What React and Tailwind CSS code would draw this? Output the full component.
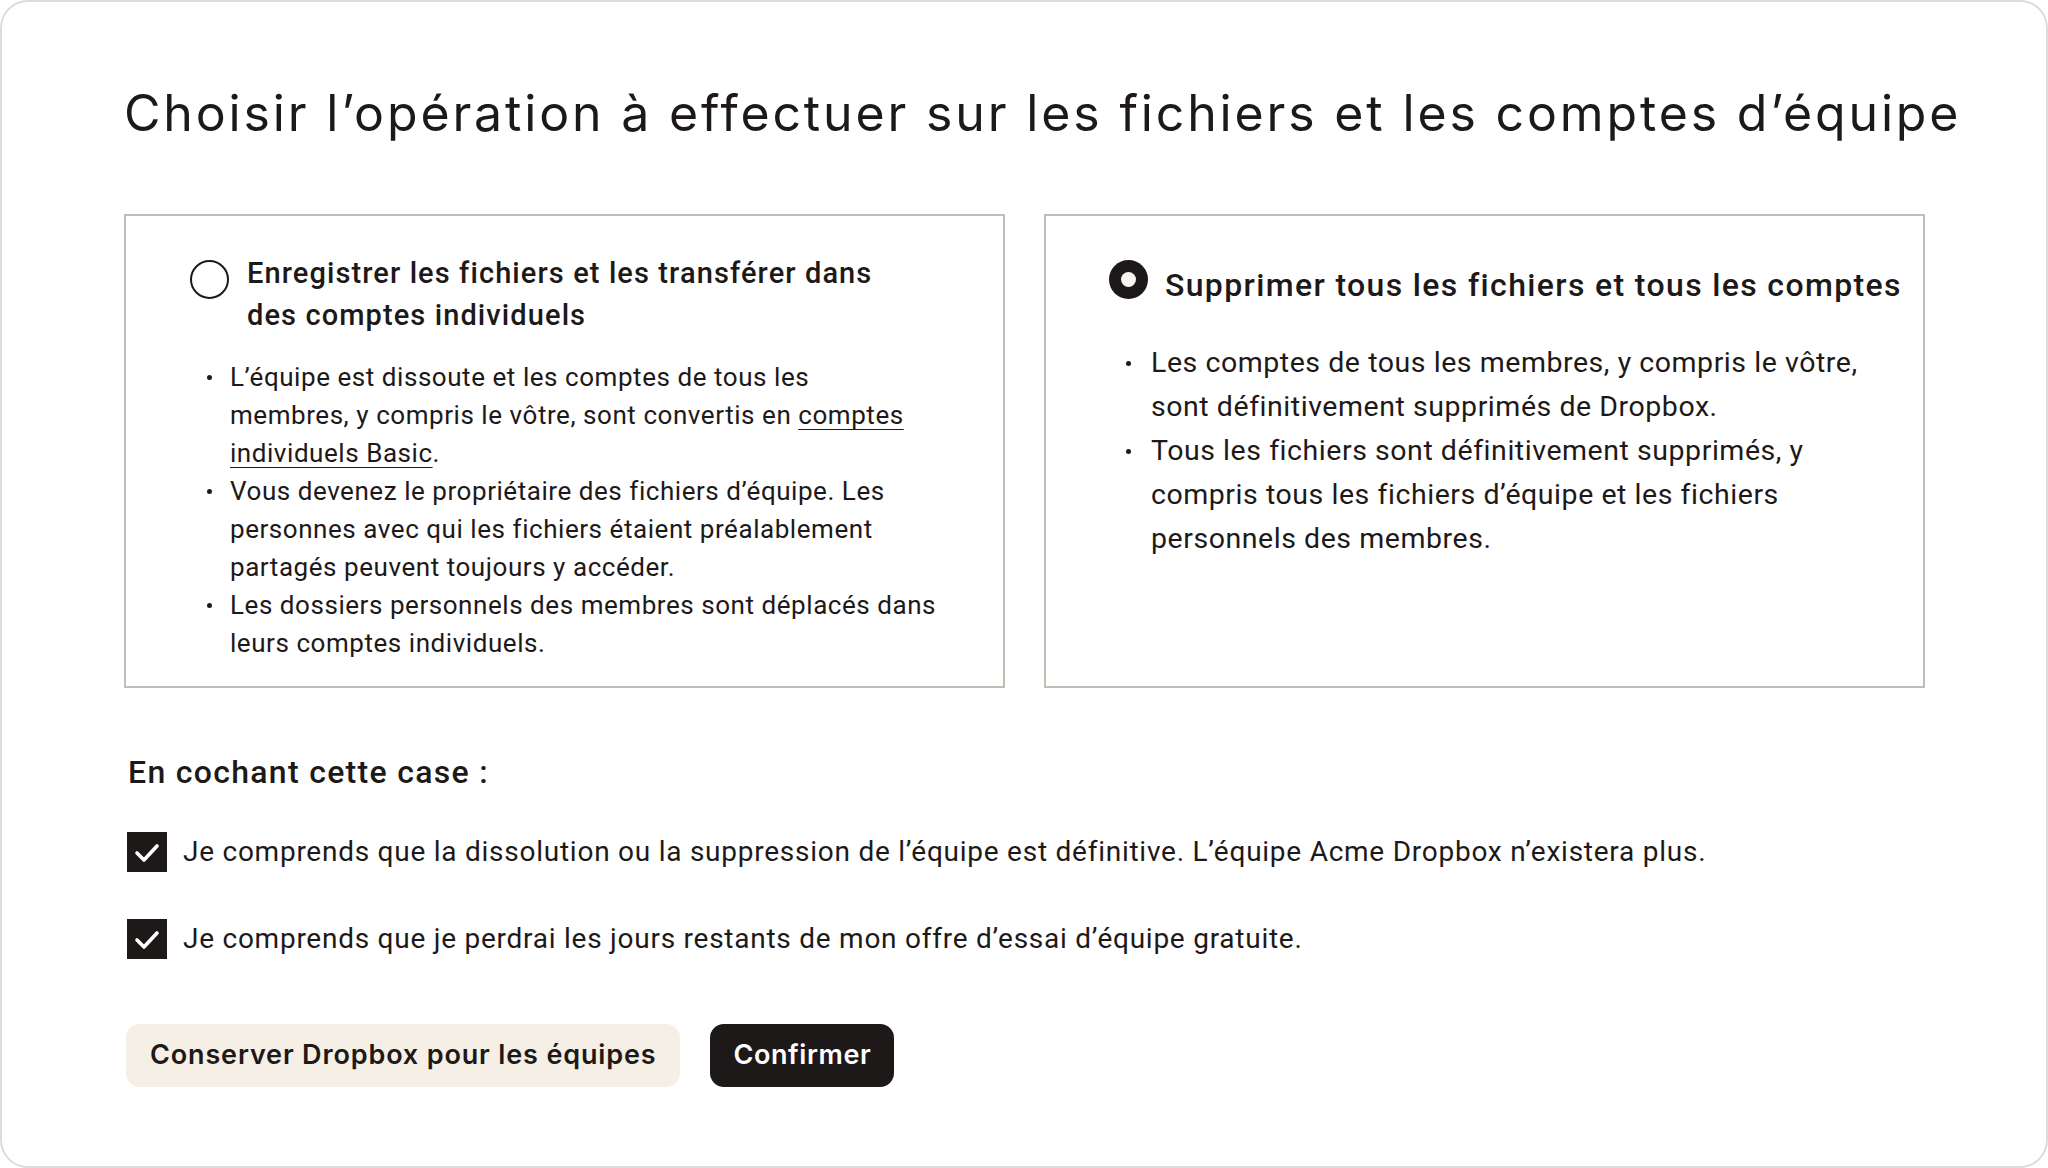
import React from "react";

const body = { fontFamily: "Roboto, 'Liberation Sans', sans-serif" };
const grot = { fontFamily: "Inter, 'Liberation Sans', sans-serif" };

function Bullet({ children, dotTop, w }) {
  return (
    <li className="flex">
      <div className={w}>
        <div className={"ml-[17px] w-[5px] h-[5px] rounded-full bg-[#1e1919] " + dotTop}></div>
      </div>
      <div>{children}</div>
    </li>
  );
}

function Check() {
  return (
    <div className="w-[40px] h-[40px] bg-[#1e1919] shrink-0 flex items-center justify-center">
      <svg width="40" height="40" viewBox="0 0 40 40" fill="none">
        <polyline points="10,21 17,28 30,14" stroke="#ffffff" strokeWidth="3.6" strokeLinecap="round" strokeLinejoin="round" />
      </svg>
    </div>
  );
}

export default function App() {
  return (
    <div className="w-[2048px] h-[1168px] bg-white text-[#1e1919]">
      <div className="w-full h-full border-2 border-[#dcdcdc] rounded-[28px] pl-[122px] pt-[81px]">
        <h1 className="text-[50px] leading-[60px] font-normal tracking-[2.85px] whitespace-nowrap" style={grot}>
          Choisir l’opération à effectuer sur les fichiers et les comptes d’équipe
        </h1>

        <div className="mt-[71px] grid grid-cols-2 gap-[39px] w-[1801px]" style={body}>
          <div className="h-[474px] border-2 border-[#c3beb5] pl-[64px] pt-[36px]">
            <div className="flex items-start gap-[18px]">
              <div className="mt-[8px] w-[39px] h-[39px] rounded-full border-2 border-[#1e1919] shrink-0"></div>
              <div className="text-[29px] leading-[42px] font-medium tracking-[1.1px]">
                Enregistrer les fichiers et les transférer dans<br />des comptes individuels
              </div>
            </div>
            <ul className="mt-[22px] text-[26px] leading-[38px] tracking-[0.55px]">
              <Bullet w="w-[40px] shrink-0" dotTop="mt-[17px]">
                L’équipe est dissoute et les comptes de tous les<br />membres, y compris le vôtre, sont convertis en{" "}
                <span className="underline underline-offset-[5px] decoration-1">comptes<br />individuels Basic</span>.
              </Bullet>
              <Bullet w="w-[40px] shrink-0" dotTop="mt-[17px]">
                Vous devenez le propriétaire des fichiers d’équipe. Les<br />personnes avec qui les fichiers étaient préalablement<br />partagés peuvent toujours y accéder.
              </Bullet>
              <Bullet w="w-[40px] shrink-0" dotTop="mt-[17px]">
                Les dossiers personnels des membres sont déplacés dans<br />leurs comptes individuels.
              </Bullet>
            </ul>
          </div>

          <div className="h-[474px] border-2 border-[#c3beb5] pl-[63px] pt-[44px]">
            <div className="flex items-start gap-[17px]">
              <div className="w-[39px] h-[39px] rounded-full bg-[#1e1919] shrink-0 flex items-center justify-center">
                <div className="w-[15px] h-[15px] rounded-full bg-[#f7f5f2]"></div>
              </div>
              <div className="mt-[3px] text-[32px] leading-[44px] font-medium tracking-[1.35px] whitespace-nowrap">
                Supprimer tous les fichiers et tous les comptes
              </div>
            </div>
            <ul className="mt-[34px] text-[28.5px] leading-[44px] tracking-[0.55px]">
              <Bullet w="w-[42px] shrink-0" dotTop="mt-[20px]">
                Les comptes de tous les membres, y compris le vôtre,<br />sont définitivement supprimés de Dropbox.
              </Bullet>
              <Bullet w="w-[42px] shrink-0" dotTop="mt-[20px]">
                Tous les fichiers sont définitivement supprimés, y<br />compris tous les fichiers d’équipe et les fichiers<br />personnels des membres.
              </Bullet>
            </ul>
          </div>
        </div>

        <div style={body}>
          <div className="mt-[63px] text-[32px] leading-[42px] font-medium tracking-[1.3px] pl-[4px]">En cochant cette case :</div>
          <div className="mt-[39px] flex items-center gap-[16px] pl-[3px]">
            <Check />
            <div className="text-[28px] leading-[40px] tracking-[0.75px] whitespace-nowrap">
              Je comprends que la dissolution ou la suppression de l’équipe est définitive. L’équipe Acme Dropbox n’existera plus.
            </div>
          </div>
          <div className="mt-[47px] flex items-center gap-[16px] pl-[3px]">
            <Check />
            <div className="text-[28px] leading-[40px] tracking-[0.75px] whitespace-nowrap">
              Je comprends que je perdrai les jours restants de mon offre d’essai d’équipe gratuite.
            </div>
          </div>
          <div className="mt-[65px] flex gap-[30px] pl-[2px]" style={grot}>
            <button className="h-[63px] px-[24px] rounded-[14px] bg-[#f5efe5] text-[27px] font-semibold tracking-[0.85px] text-[#1e1919]">
              Conserver Dropbox pour les équipes
            </button>
            <button className="h-[63px] px-[23px] rounded-[14px] bg-[#1e1919] text-[27px] font-semibold tracking-[0.6px] text-white">
              Confirmer
            </button>
          </div>
        </div>
      </div>
    </div>
  );
}
